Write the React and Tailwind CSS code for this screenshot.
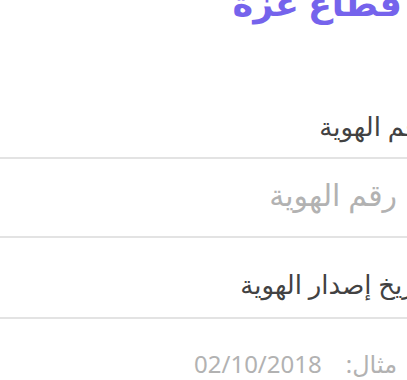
import React from 'react';

const fields = [
  { id: 'idNumber', label: 'رقم الهوية', placeholder: 'رقم الهوية', wrap: 'mt-[83px]', lbl: 'pb-[16px]', input: 'text-[30px] pb-[6px]' },
  { id: 'issueDate', label: 'تاريخ إصدار الهوية', placeholder: 'مثال:\u200302/10/2018', wrap: 'mt-[31px]', lbl: 'pb-[18px]', input: 'text-[24px] pt-[11px]' },
];

export default function App() {
  return (
    <div className="w-[407px] h-[380px] overflow-hidden bg-white">
      <div dir="rtl" className="w-[430px] font-['Noto_Sans','DejaVu_Sans',sans-serif]">
        {/* العنوان */}
        <h1 className="-mt-[22px] pr-[28px] text-[35px] leading-[50px] font-bold text-[#7563ec]">قطاع غزة</h1>
        {fields.map(f => (
          <div key={f.id} className={f.wrap}>
            <label htmlFor={f.id} className={`block text-[26px] leading-[30px] text-[#424242] border-b-2 border-[#e3e3e3] ${f.lbl}`}>
              {f.label}
            </label>
            <input
              id={f.id}
              type="text"
              placeholder={f.placeholder}
              className={`block w-full h-[79px] pr-[33px] text-[#333] placeholder:text-[#b2b2b2] outline-none border-b-2 border-[#e3e3e3] bg-white ${f.input}`}
            />
          </div>
        ))}
      </div>
    </div>
  );
}
